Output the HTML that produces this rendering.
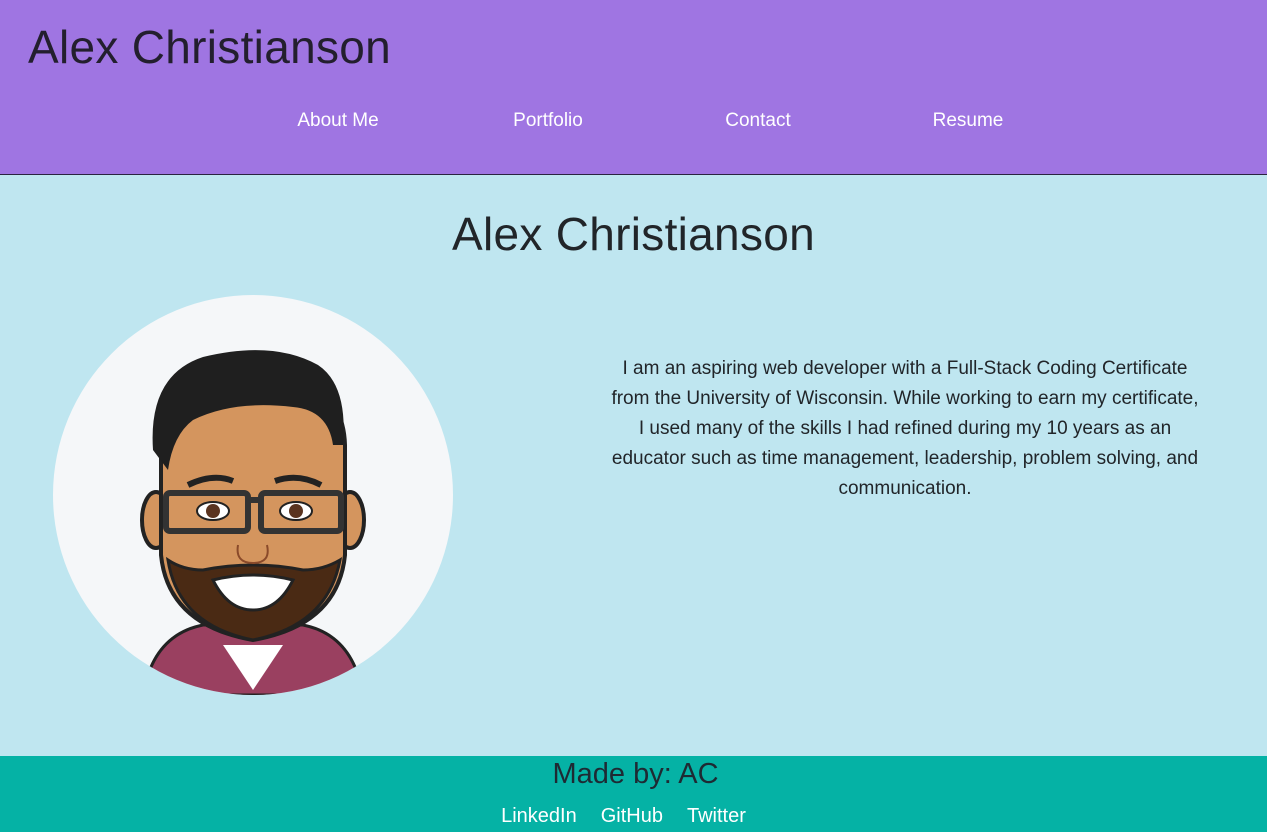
<!DOCTYPE html>
<html><head><meta charset="utf-8"><style>
*{margin:0;padding:0;box-sizing:border-box}
body{width:1267px;height:832px;overflow:hidden;font-family:"Segoe UI","Liberation Sans",sans-serif;background:#bfe6f0;color:#212529;position:relative}
header{position:absolute;left:0;top:0;width:1267px;height:175px;background:#9f75e2;border-bottom:1px solid #2a2340}
header h1{position:absolute;left:28px;top:20px;font-size:46px;font-weight:400;color:#231f2e;letter-spacing:0.3px}
.nav a{position:absolute;top:110px;font-size:19px;color:#fff;text-decoration:none;transform:translateX(-50%);white-space:nowrap}
h2{position:absolute;left:0;width:1267px;text-align:center;top:207px;font-size:46px;font-weight:500;color:#212529;letter-spacing:0.3px}
.p{position:absolute;left:555px;width:700px;top:354px;text-align:center;font-size:19px;line-height:30px;color:#212529;white-space:nowrap}
svg.av{position:absolute;left:53px;top:295px}
footer{position:absolute;left:0;top:756px;width:1267px;height:76px;background:#05b2a5;text-align:center}
footer .m{font-size:29px;font-weight:500;color:#1e2a33;margin-top:2px;padding-left:4px}
footer .l{font-size:20px;color:#fff;margin-top:14px;margin-left:-20px}
footer .l span{margin:0 12px}
</style></head><body>
<header><h1>Alex Christianson</h1>
<div class="nav"><a style="left:338px">About Me</a><a style="left:548px">Portfolio</a><a style="left:758px">Contact</a><a style="left:968px">Resume</a></div>
</header>
<h2>Alex Christianson</h2>
<svg class="av" width="400" height="402" viewBox="0 0 400 402">
<defs><clipPath id="c"><circle cx="200" cy="200" r="200"/></clipPath></defs>
<circle cx="200" cy="200" r="200" fill="#f5f7f9"/>
<g clip-path="url(#c)">
<path d="M90 400 Q100 340 150 330 L250 330 Q300 340 310 400 Z" fill="#9a4060" stroke="#222" stroke-width="3"/>
<path d="M170 350 L200 395 L230 350 Z" fill="#fff"/>
<ellipse cx="103" cy="225" rx="14" ry="28" fill="#d4955e" stroke="#222" stroke-width="4"/>
<ellipse cx="297" cy="225" rx="14" ry="28" fill="#d4955e" stroke="#222" stroke-width="4"/>
<path d="M108 140 Q110 80 200 75 Q290 80 292 150 L292 260 Q285 330 200 345 Q115 330 108 260 Z" fill="#d4955e" stroke="#222" stroke-width="4"/>
<path d="M115 265 Q125 330 200 345 Q275 330 287 265 Q270 275 250 275 Q200 265 150 275 Q130 275 115 265 Z" fill="#4a2a14" stroke="#222" stroke-width="3"/>
<path d="M160 285 Q200 275 240 285 Q225 315 200 315 Q175 315 160 285 Z" fill="#fff" stroke="#222" stroke-width="3"/>
<path d="M100 155 Q95 80 150 62 Q220 45 265 70 Q295 90 290 150 L280 150 Q275 115 240 112 Q180 105 140 125 Q120 140 115 175 Z" fill="#1f1f1f"/>
<rect x="113" y="198" width="82" height="38" rx="4" fill="none" stroke="#333" stroke-width="6"/>
<rect x="208" y="198" width="80" height="38" rx="4" fill="none" stroke="#333" stroke-width="6"/>
<line x1="195" y1="205" x2="208" y2="205" stroke="#333" stroke-width="6"/>
<ellipse cx="160" cy="216" rx="16" ry="9" fill="#fff" stroke="#222" stroke-width="2"/><circle cx="160" cy="216" r="7" fill="#5a3420"/>
<ellipse cx="243" cy="216" rx="16" ry="9" fill="#fff" stroke="#222" stroke-width="2"/><circle cx="243" cy="216" r="7" fill="#5a3420"/>
<path d="M135 190 Q160 178 180 186" stroke="#222" stroke-width="6" fill="none"/>
<path d="M222 186 Q245 178 268 190" stroke="#222" stroke-width="6" fill="none"/>
<path d="M185 250 Q182 268 200 268 Q218 268 214 250" stroke="#8a4a2a" stroke-width="2" fill="none"/>
</g>
</svg>
<div class="p">I am an aspiring web developer with a Full-Stack Coding Certificate<br>from the University of Wisconsin. While working to earn my certificate,<br>I used many of the skills I had refined during my 10 years as an<br>educator such as time management, leadership, problem solving, and<br>communication.</div>
<footer><div class="m">Made by: AC</div><div class="l"><span>LinkedIn</span><span>GitHub</span><span>Twitter</span></div></footer>
</body></html>
